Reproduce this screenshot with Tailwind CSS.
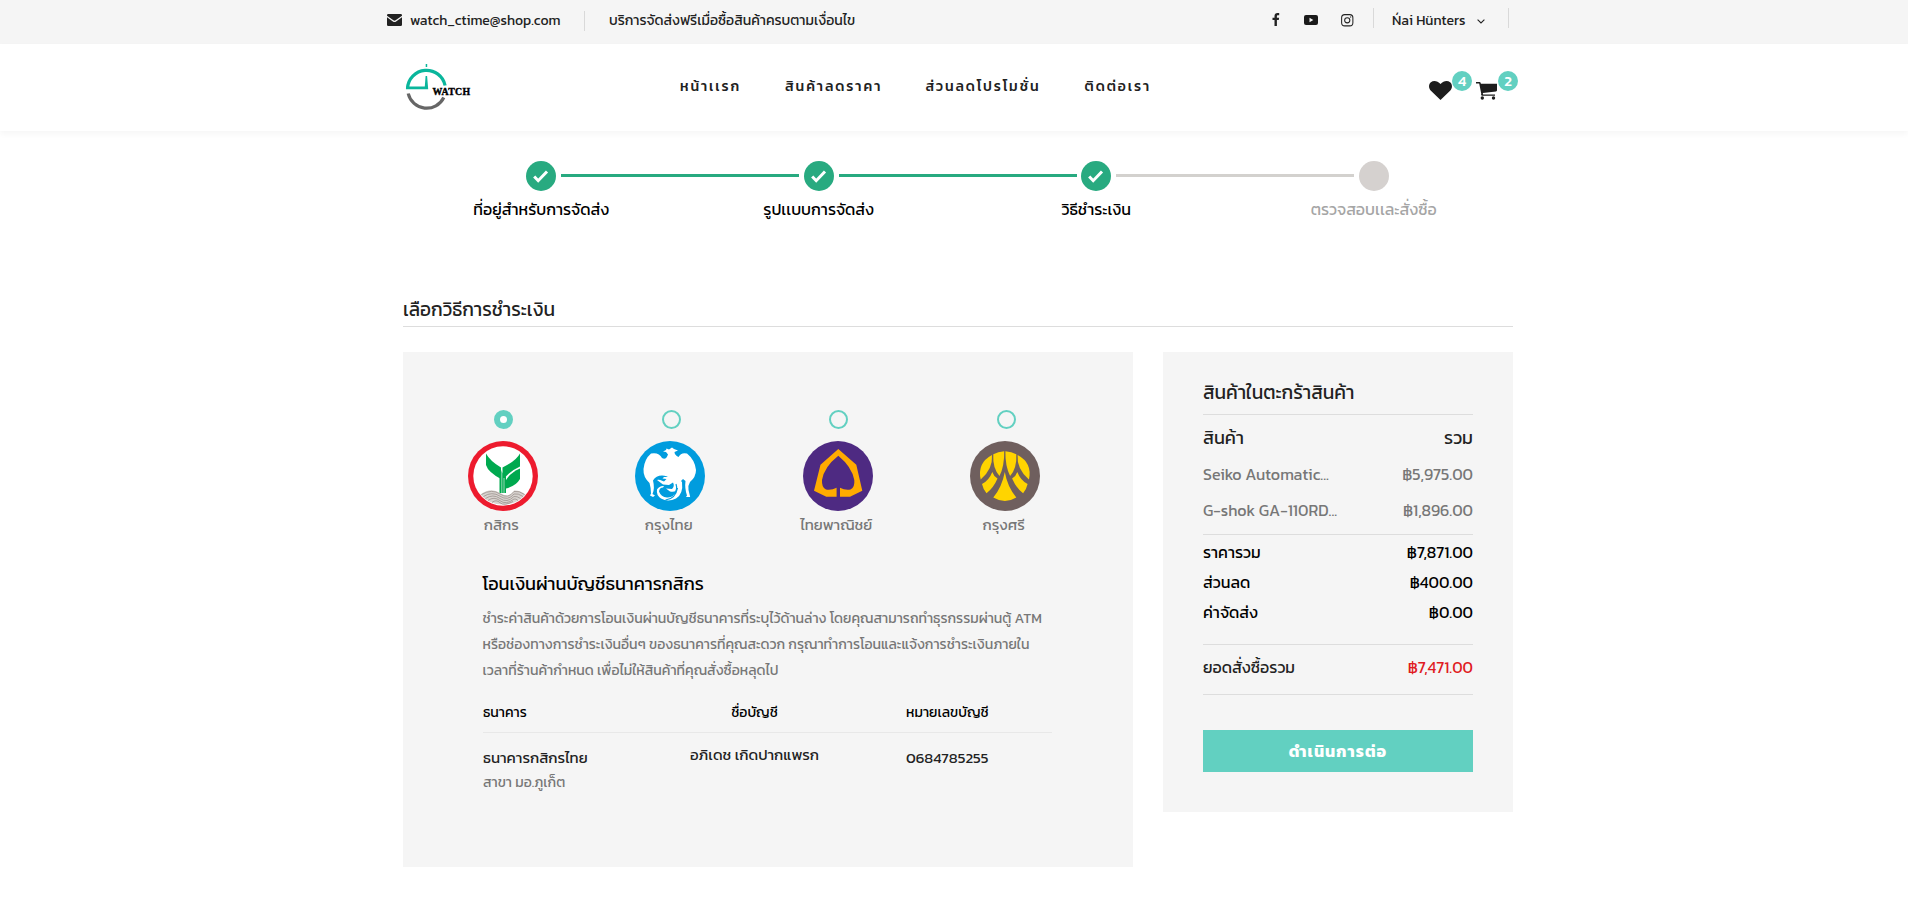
<!DOCTYPE html>
<html lang="th">
<head>
<meta charset="utf-8">
<title>Watch - วิธีชำระเงิน</title>
<script src="https://cdn.jsdelivr.net/npm/@tailwindcss/browser@4"></script>
</head>
<body class="h-[924px] w-[1908px] overflow-hidden bg-white font-['Kanit','Noto_Sans_Thai','Noto_Sans',sans-serif] font-normal whitespace-nowrap text-[#222]">

<!-- Top bar -->
<div class="flex h-11 items-start bg-[#f5f5f5] pl-[387px] text-[14px] leading-5">
  <svg class="mt-[14px] h-3 w-[15px]" viewBox="0 0 15 12" fill="#222"><path d="M1.300 0h12.400A1.300 1.300 0 0 1 15 1.300v.5L8.600 6.300q-1.100.8-2.200 0L0 1.800v-.5A1.300 1.300 0 0 1 1.300 0z"/><path d="M0 3.200l5.900 4.200q1.600 1 3.200 0L15 3.200v7.500A1.300 1.300 0 0 1 13.700 12H1.300A1.300 1.300 0 0 1 0 10.700z"/></svg>
  <div class="mt-[11px] ml-2 w-[174px]">watch_ctime@shop.com</div>
  <div class="mt-[11px] h-5 w-px bg-[#d9d9d9]"></div>
  <div class="mt-[11px] ml-6 w-[663px]">บริการจัดส่งฟรีเมื่อซื้อสินค้าครบตามเงื่อนไข</div>
  <svg class="mt-[13px] h-[13px] w-[8px]" viewBox="0 0 8 13" fill="#222"><path d="M7.200.1v2.100H6c-.9 0-1.100.5-1.100 1.100v1.400h2.200l-.3 2.200H4.900V13H2.500V6.900h-2V4.700h2V3C2.500 1.100 3.700 0 5.400 0z"/></svg>
  <svg class="mt-[15px] ml-6 h-[10px] w-[14px]" viewBox="0 0 14 10"><rect width="14" height="10" rx="2" fill="#1a1a1a"/><path d="M5.500 2.800v4.400L9.300 5z" fill="#f5f5f5"/></svg>
  <svg class="mt-[14px] ml-[23px] h-[12.500px] w-[12.500px]" viewBox="0 0 12 12" fill="none" stroke="#222" stroke-width="1"><rect x=".6" y=".6" width="10.800" height="10.800" rx="3"/><circle cx="6" cy="6" r="2.500"/><circle cx="9.200" cy="2.800" r=".2"/></svg>
  <div class="mt-2 ml-[19.500px] h-5 w-px bg-[#d9d9d9]"></div>
  <div class="mt-[11px] ml-[18px] w-[85px]">Ńai Hünters</div>
  <svg class="mt-[19px] h-[5px] w-[8px]" viewBox="0 0 8 5" fill="none" stroke="#222" stroke-width="1.100"><path d="M.6.6L4 4 7.400.6"/></svg>
  <div class="mt-2 ml-[23px] h-5 w-px bg-[#d9d9d9]"></div>
</div>

<!-- Header -->
<header class="flex h-[87px] items-start bg-white pl-[405px] shadow-[0_3px_6px_rgba(0,0,0,0.04)]">
  <svg class="mt-[19px] h-[48px] w-[68px]" viewBox="0 0 68 48">
    <rect x="20.700" y="1" width="1.500" height="3" fill="#0ab69c"/>
    <path d="M2.500 25.500A19 19 0 0 1 40.100 22.500" fill="none" stroke="#0ab69c" stroke-width="3.200"/>
    <path d="M1 23.500H19.800L20.600 13h1.500L23.200 26.200H1z" fill="#0ab69c"/>
    <path d="M3.200 30.500A19 19 0 0 0 38.800 34.500" fill="none" stroke="#666" stroke-width="3.200"/>
    <text x="27.500" y="32" font-family="Liberation Serif" font-size="9.800" font-weight="700" fill="#000" stroke="#000" stroke-width=".4" textLength="37.500" lengthAdjust="spacing">WATCH</text>
  </svg>
  <nav class="mt-[31px] ml-[207px] flex text-[14px] leading-6 font-medium tracking-[1.900px]">
    <a class="w-[105px]">หน้าเเรก</a>
    <a class="w-[140.500px]">สินค้าลดราคา</a>
    <a class="w-[159px]">ส่วนลดโปรโมชั่น</a>
    <a class="w-[344.500px]">ติดต่อเรา</a>
  </nav>
  <svg class="mt-[37px] h-[19px] w-[23px]" viewBox="0 0 23 19" fill="#1d1d1d"><path d="M11.500 19L1.900 9.800C-.8 7-.4 3 1.900 1.200 4.500-.7 8.500-.3 11.500 3 14.500-.3 18.500-.7 21.100 1.200 23.400 3 23.800 7 21.100 9.800z"/></svg>
  <span class="mt-[27px] size-5 rounded-full bg-[#62d0c1] text-center text-[15px] leading-5 font-medium text-white">4</span>
  <svg class="mt-[38px] ml-1 h-[18px] w-[21px]" viewBox="0 0 21 18" fill="#1d1d1d"><path d="M0 0h3.600q.8 0 1 .8L4.900 1.800H21v6.500q0 1-1 1.100L6.800 11l.3 1.500H19v1.300H6q-1-.1-1-1.200L5.300 12 3.200 1.500H0z"/><circle cx="6.300" cy="16" r="1.700"/><circle cx="17.500" cy="16" r="1.700"/></svg>
  <span class="mt-[27px] ml-px size-5 rounded-full bg-[#62d0c1] text-center text-[15px] leading-5 font-medium text-white">2</span>
</header>

<!-- Checkout steps -->
<div class="ml-[403px] flex w-[1110px] pt-[30px] text-center text-[16px] leading-6 text-black">
  <div class="w-[277.500px]">
    <div class="flex h-[30px] items-center pl-[123px]"><svg class="size-[30px] shrink-0" viewBox="0 0 30 30"><circle cx="15" cy="15" r="15" fill="#28aa80"/><path d="M8.200 15.500l4 4.200L21 10.500" fill="none" stroke="#fff" stroke-width="3"/></svg><div class="-mt-[1px] ml-[5px] h-[3px] w-[238px] shrink-0 bg-[#28aa80]"></div></div>
    <div class="mt-[6px] pr-px">ที่อยู่สำหรับการจัดส่ง</div>
  </div>
  <div class="w-[277.500px]">
    <div class="flex h-[30px] items-center pl-[123px]"><svg class="size-[30px] shrink-0" viewBox="0 0 30 30"><circle cx="15" cy="15" r="15" fill="#28aa80"/><path d="M8.200 15.500l4 4.200L21 10.500" fill="none" stroke="#fff" stroke-width="3"/></svg><div class="-mt-[1px] ml-[5px] h-[3px] w-[238px] shrink-0 bg-[#28aa80]"></div></div>
    <div class="mt-[6px] pr-px">รูปเเบบการจัดส่ง</div>
  </div>
  <div class="w-[277.500px]">
    <div class="flex h-[30px] items-center pl-[123px]"><svg class="size-[30px] shrink-0" viewBox="0 0 30 30"><circle cx="15" cy="15" r="15" fill="#28aa80"/><path d="M8.200 15.500l4 4.200L21 10.500" fill="none" stroke="#fff" stroke-width="3"/></svg><div class="-mt-[1px] ml-[5px] h-[3px] w-[238px] shrink-0 bg-[#d3d1ce]"></div></div>
    <div class="mt-[6px] pr-px">วิธีชำระเงิน</div>
  </div>
  <div class="w-[277.500px]">
    <div class="flex h-[30px] items-center pl-[123px]"><div class="size-[30px] rounded-full bg-[#d5d1cf]"></div></div>
    <div class="mt-[6px] pr-px text-[#a5a5a5]">ตรวจสอบเเละสั่งซื้อ</div>
  </div>
</div>

<main class="ml-[403px] w-[1110px]">
  <h1 class="mt-[74px] h-8 border-b border-[#ddd] pt-[2px] text-[19px] leading-[26px]">เลือกวิธีการชำระเงิน</h1>

  <div class="mt-[25px] flex items-start justify-between">
    <!-- Bank transfer panel -->
    <section class="h-[515px] w-[730px] bg-[#f5f5f5] pt-[58px]">
      <div class="ml-4 grid w-[670px] grid-cols-4 justify-items-center text-[15px] leading-6 text-[#777]">
        <div class="flex flex-col items-center">
          <div class="ml-px size-[19px] rounded-full border-[6px] border-[#62d0c1] bg-white"></div>
          <svg class="mt-3 size-[70px]" viewBox="0 0 70 70">
            <circle cx="35" cy="35" r="35" fill="#ed1b2e"/><circle cx="35" cy="35" r="29.700" fill="#fff"/>
            <path d="M18 12.500Q22 20 33 26.500V38Q20 31 18 24z" fill="#00a94f"/>
            <path d="M52 12.500Q48 20 34.500 26.500V40L36 38.500Q40 31 52 25.500z" fill="#00a94f"/>
            <path d="M52 27.500V38Q48 45 38 47.500V39Q42 32 52 27.500z" fill="#00a94f"/>
            <path d="M31.500 28v24h6.500V36z" fill="#00a94f"/><path d="M33.800 29v23M36 37v15" stroke="#b9e6cb" stroke-width=".8"/>
            <path d="M12.500 53.500Q23 46 32 52T46 49.500Q52 49 57.500 53.500 49 63.500 35 63.500 21 63.500 12.500 53.500z" fill="#d8d3cf"/>
            <g fill="none" stroke="#a39a95" stroke-width=".9"><path d="M13.500 53.500Q24 47.500 32 53T46 50.500Q51 49.500 56.500 53.500"/><path d="M15.500 55.500Q24 50 32 55.200T46 53Q50 52 55 55.500"/><path d="M17.500 57.500Q25 52.500 32 57.500T46 55.500Q49 55 52.500 57.500"/><path d="M20 59.500Q26 55 32 59.700T46 58Q48 57.500 50 59.500"/><path d="M24 61.500Q28 58 32 61.700T45 60.500"/></g>
          </svg>
          <div class="mt-[2px] pr-[3px]">กสิกร</div>
        </div>
        <div class="flex flex-col items-center">
          <div class="ml-[2px] size-[19px] rounded-full border-2 border-[#62d0c1]"></div>
          <svg class="mt-3 size-[70px]" viewBox="0 0 70 70">
            <circle cx="35" cy="35" r="35" fill="#009cde"/>
            <g fill="#fff">
              <path d="M28 10.500l3-1.500.5-1.500 2.500 1L37 6.500l2 1.500 4 1.500-3.500 1.500q0 3 4 5Q46 11 52 12.500 60 19 61 29q0 7-6 12 -2.500 4-1.500 8l1.700 7-4.200 0 1-1.500Q49.500 47 50.500 40l-2.500-2-3 3q-4-3-10-3.500-3-3-8-3-6 0-9 5 2 8-.5 13.500L20 54.500l-2 1.500-3-1.500 1-2Q16 47 14.500 42 8 36 8.500 28 9.500 18 16 12.500q8-1.500 11 4.500 4 2.500 6-3.500l-2-2.500z"/>
              <path d="M36 36q8 1 11 5 1.500 12-6 16.500-8 4-15 0-5-3.500-4-9 2.500-4 7-3.500l-1 1.500q-3.500 0-4 4 2 5.500 8 6 7 .5 9-7-2 2-6 1l-4-3 6 .5q3-3 1-6.500l-4 2.500-6-.5-6-4.500 2-.5 5 2 2.500-2.500-4-.5 1.500-1.500z"/>
            </g>
            <path d="M27 49q2 5.500 8 5M30.500 59q10-1 12-12M23.500 38l6 1M41 43q2 6-2 10" fill="none" stroke="#009cde" stroke-width="1.200"/>
          </svg>
          <div class="mt-[2px] pr-[3px]">กรุงไทย</div>
        </div>
        <div class="flex flex-col items-center">
          <div class="ml-px size-[19px] rounded-full border-2 border-[#62d0c1]"></div>
          <svg class="mt-3 size-[70px]" viewBox="0 0 70 70">
            <circle cx="35" cy="35" r="35" fill="#4e2a82"/>
            <path d="M35.300 8L53.300 23.700 59.300 49.700 47 55.700H37V46.700Q42 49.500 47.500 48.500 52 46.500 51.300 39 49 26 35.300 14.700 21 26 19 39 18.500 46.500 23 48.500 28.500 49.500 33.600 46.700V55.700H23.300L11 49.700 17.500 23.700z" fill="#ffab00"/>
          </svg>
          <div class="mt-[2px] pr-[3px]">ไทยพาณิชย์</div>
        </div>
        <div class="flex flex-col items-center">
          <div class="ml-[2px] size-[19px] rounded-full border-2 border-[#62d0c1]"></div>
          <svg class="mt-3 size-[70px]" viewBox="0 0 70 70">
            <circle cx="35" cy="35" r="35" fill="#6f5f5e"/>
            <g fill="#ffd400"><path id="p1" d="M22 14Q23 28 10.700 38.500 7 22 22 14z"/><path id="p2" d="M23.300 13.200Q28 10.500 34.200 10.200 34.500 25 29.500 35 22.500 27 23.300 13.200z"/><path id="p3" d="M22.300 31Q23.500 35 27.500 37.500 23.500 47 16.500 52.200 13 48 12 43 19 39.500 22.300 31z"/>
            <g transform="matrix(-1 0 0 1 69.600 0)"><use href="#p1"/><use href="#p2"/><use href="#p3"/></g>
            <path d="M34.800 31Q37.500 46 46.300 56.500 35 63.500 23.300 56.500 32 46 34.800 31z"/></g>
          </svg>
          <div class="mt-[2px] pr-[3px]">กรุงศรี</div>
        </div>
      </div>

      <div class="ml-[79.500px] w-[569px]">
        <h2 class="mt-[33px] text-[18px] leading-7 text-black">โอนเงินผ่านบัญชีธนาคารกสิกร</h2>
        <p class="mt-[8px] text-[14px] leading-[26px] text-[#777]">ชำระค่าสินค้าด้วยการโอนเงินผ่านบัญชีธนาคารที่ระบุไว้ด้านล่าง โดยคุณสามารถทำธุรกรรมผ่านตู้ ATM<br>หรือช่องทางการชำระเงินอื่นๆ ของธนาคารที่คุณสะดวก กรุณาทำการโอนและแจ้งการชำระเงินภายใน<br>เวลาที่ร้านค้ากำหนด เพื่อไม่ให้สินค้าที่คุณสั่งซื้อหลุดไป</p>
        <div class="mt-[17px] grid h-[32px] grid-cols-[180px_184px_205px] border-b border-[#e8e8e8] text-[14px] leading-6 text-black">
          <div class="pl-[0.500px]">ธนาคาร</div>
          <div class="text-center">ชื่อบัญชี</div>
          <div class="pl-[59.500px]">หมายเลขบัญชี</div>
        </div>
        <div class="mt-[13px] grid grid-cols-[180px_184px_205px] text-[15px] leading-6">
          <div class="pl-[0.500px]">ธนาคารกสิกรไทย<br><span class="text-[14px] text-[#777]">สาขา มอ.ภูเก็ต</span></div>
          <div class="-mt-[3px] text-center">อภิเดช เกิดปากแพรก</div>
          <div class="pl-[59.500px]">0684785255</div>
        </div>
      </div>
    </section>

    <!-- Order summary -->
    <aside class="h-[460px] w-[350px] bg-[#f5f5f5] px-10 pt-5 text-[16px]">
      <h2 class="h-[43px] border-b border-[#ddd] text-[19px] leading-[41px]">สินค้าในตะกร้าสินค้า</h2>
      <div class="border-b border-[#ddd] pt-[5px] pb-[6px] leading-9 text-[#777]">
        <div class="flex justify-between text-[18px] text-[#222]"><span>สินค้า</span><span>รวม</span></div>
        <div class="flex justify-between"><span>Seiko Automatic...</span><span>฿5,975.00</span></div>
        <div class="flex justify-between"><span>G-shok GA-110RD...</span><span>฿1,896.00</span></div>
      </div>
      <div class="border-b border-[#ddd] pt-[2px] pb-[17px] leading-[30px] text-black">
        <div class="flex justify-between"><span>ราคารวม</span><span>฿7,871.00</span></div>
        <div class="flex justify-between"><span>ส่วนลด</span><span>฿400.00</span></div>
        <div class="flex justify-between"><span>ค่าจัดส่ง</span><span>฿0.00</span></div>
      </div>
      <div class="flex h-[50px] justify-between border-b border-[#ddd] leading-[44px]"><span>ยอดสั่งซื้อรวม</span><span class="text-[#e01b22]">฿7,471.00</span></div>
      <div class="mt-[35px] h-[42px] bg-[#62d0c1] text-center text-[16px] leading-[42px] font-bold tracking-[1.100px] text-white">ดำเนินการต่อ</div>
    </aside>
  </div>
</main>
</body>
</html>
